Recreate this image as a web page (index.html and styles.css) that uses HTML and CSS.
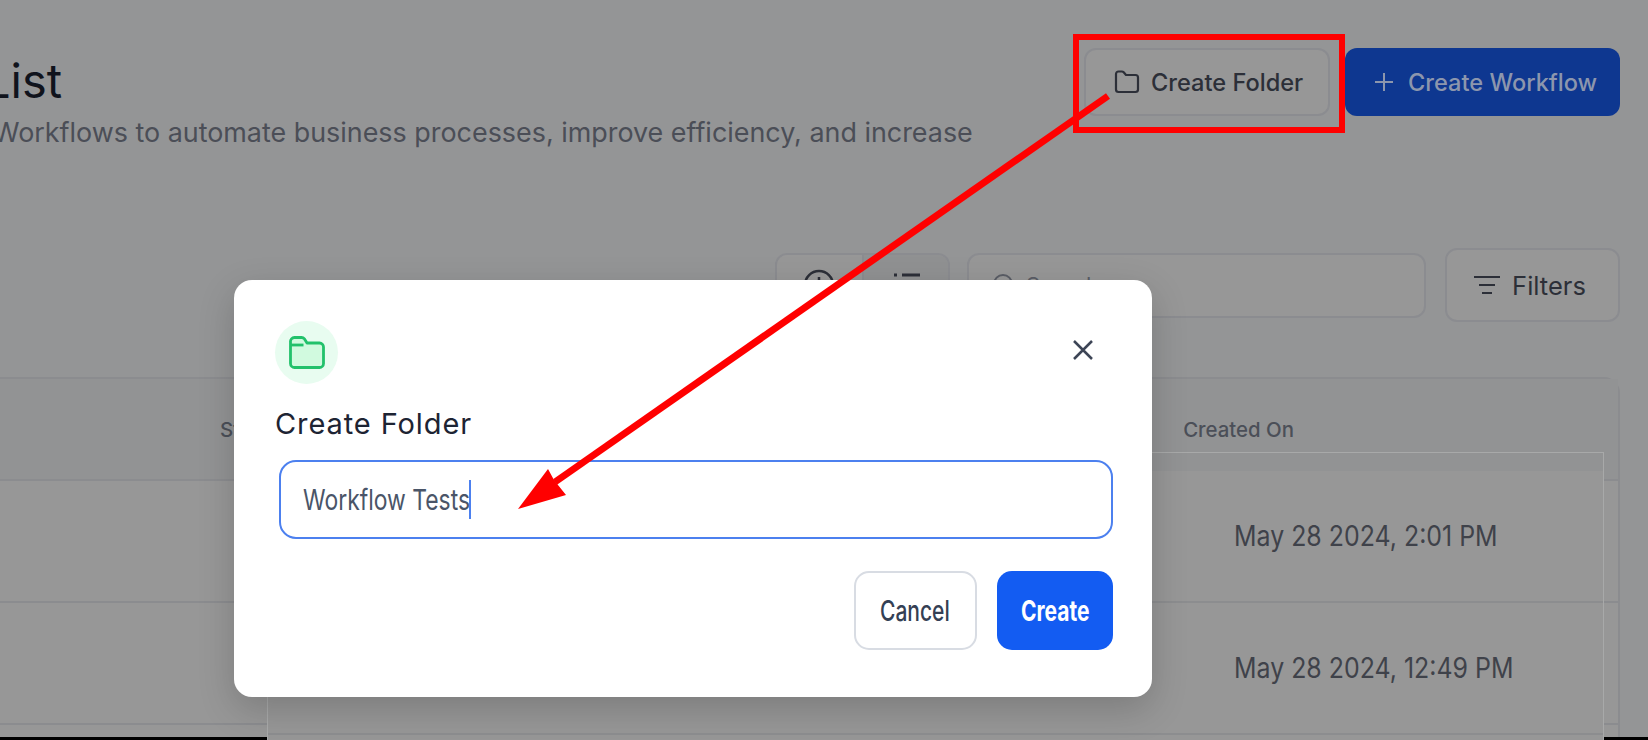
FILE: index.html
```html
<!DOCTYPE html>
<html lang="en">

<head>
    <meta charset="UTF-8">
    <meta name="viewport" content="width=device-width, initial-scale=1.0">
    <title>Workflow List</title>
    <link rel="stylesheet" href="styles.css">
</head>

<body>
    <div class="page">
        <div class="header">
            <div class="headerText">
                <h1 class="title">List</h1>
                <p class="subtitle">Workflows to automate business processes, improve efficiency, and increase</p>
            </div>
            <div class="headerActions">
                <button class="btn btnOutline">
                    <svg width="26" height="24" viewBox="0 0 26 24" fill="none" stroke="#2c2f38" stroke-width="2.200" stroke-linejoin="round">
                        <path d="M2 6.500V4a2.500 2.500 0 0 1 2.500-2.500h3.400c.7 0 1.300.3 1.800.8L12 5h9.500A2.500 2.500 0 0 1 24 7.500V19.500a2.500 2.500 0 0 1-2.500 2.500h-17A2.500 2.500 0 0 1 2 19.500z" />
                    </svg>
                    Create Folder
                </button>
                <button class="btn btnPrimary">
                    <svg width="18" height="18" viewBox="0 0 18 18" stroke="#8c96ad" stroke-width="2">
                        <path d="M9 0v18M0 9h18" />
                    </svg>
                    Create Workflow
                </button>
            </div>
        </div>

        <div class="toolbar">
            <div class="viewToggle">
                <div class="viewOption">
                    <svg width="32" height="32" viewBox="0 0 32 32" fill="none" stroke="#2c2f38" stroke-width="2.500">
                        <circle cx="16" cy="16" r="14" />
                        <path d="M16 8v9" />
                    </svg>
                </div>
                <div class="viewOption viewActive">
                    <svg width="32" height="32" viewBox="0 0 32 32" fill="none" stroke="#2c2f38" stroke-width="3">
                        <path d="M4 6h3M12 6h18M4 16h3M12 16h18" />
                    </svg>
                </div>
            </div>
            <div class="search">
                <svg width="24" height="24" viewBox="0 0 24 24" fill="none" stroke="#5a5d66" stroke-width="2">
                    <circle cx="11" cy="11" r="9" />
                </svg>
                <span>Search</span>
            </div>
            <button class="btn btnFilters">
                <svg width="26" height="20" viewBox="0 0 26 20" stroke="#2c2f38" stroke-width="2">
                    <path d="M0 2h26M5 10h16M8 18h10" />
                </svg>
                Filters
            </button>
        </div>

        <div class="tableCard">
            <div class="tableHead">
                <span class="headStatus">Status</span>
                <span class="headCreated">Created On</span>
            </div>
            <div class="tableRow"></div>
            <div class="tableRow"></div>
            <div class="tableRowEnd"></div>
        </div>
    </div>

    <div class="bottomEdge"></div>

    <div class="pastedRows">
        <div class="pastedHead"></div>
        <div class="pastedRow"><span class="dateText">May 28 2024, 2:01 PM</span></div>
        <div class="pastedRow"><span class="dateText">May 28 2024, 12:49 PM</span></div>
    </div>

    <div class="modal">
        <div class="modalTop">
            <div class="modalIcon">
                <svg width="36" height="33" viewBox="0 0 36 33" fill="#d1fadf" stroke="#22c16b" stroke-width="2.800" stroke-linejoin="round">
                    <path d="M1.500 6a4 4 0 0 1 4-4.500h7c1.200 0 2.200.5 3 1.400L18 7h12.500a4 4 0 0 1 4 4v16.500a4 4 0 0 1-4 4h-25a4 4 0 0 1-4-4z" />
                    <path d="M1.500 9h13" fill="none" />
                </svg>
            </div>
            <svg class="closeIcon" width="22" height="22" viewBox="0 0 22 22" stroke="#3d4556" stroke-width="2.500">
                <path d="M2 2l18 18M20 2L2 20" />
            </svg>
        </div>
        <h2 class="modalTitle">Create Folder</h2>
        <div class="inputBox">
            <span class="squeezed inputText">Workflow Tests</span><span class="caret"></span>
        </div>
        <div class="modalActions">
            <button class="modalBtn cancelBtn"><span class="squeezed btnLabel">Cancel</span></button>
            <button class="modalBtn createBtn"><span class="squeezed btnLabel">Create</span></button>
        </div>
    </div>

    <svg class="annotation" width="1648" height="740" viewBox="0 0 1648 740" fill="#ff0000">
        <rect x="1076" y="37" width="266" height="93" fill="none" stroke="#ff0000" stroke-width="6" />
        <path d="M1108 96L555 482" stroke="#ff0000" stroke-width="7" />
        <path d="M518 509L548 469L554 480L566 495z" />
    </svg>
</body>

</html>
```

FILE: styles.css
```css
* {
    box-sizing: border-box;
}

html,
body {
    margin: 0;
    height: 100%;
    overflow: hidden;
}

body {
    position: relative;
    background-color: #949596;
    font-family: Inter, "Liberation Sans", sans-serif;
}

button {
    font-family: inherit;
}

.page {
    height: 740px;
    padding: 48px 28px 0 0;
    overflow: hidden;
}

.header {
    display: flex;
    justify-content: space-between;
    align-items: flex-start;
    height: 68px;
}

.headerText {
    white-space: nowrap;
}

.title {
    margin: 5px 0 0 -16px;
    font-size: 47px;
    line-height: 56px;
    font-weight: 400;
    color: #10131c;
}

.subtitle {
    margin: 7px 0 0 -7px;
    font-size: 26.900px;
    line-height: 32px;
    color: #4b4e57;
}

.headerActions {
    display: flex;
    gap: 15px;
}

.btn {
    display: flex;
    align-items: center;
    height: 68px;
    border-radius: 12px;
    font-size: 23.600px;
    font-weight: 500;
}

.btnOutline {
    width: 246px;
    padding: 0 0 0 28px;
    gap: 11px;
    background-color: #979797;
    border: 2px solid #8b8c90;
    color: #2c2f38;
}

.btnPrimary {
    width: 275px;
    padding: 0 0 0 30px;
    gap: 15px;
    background-color: #0e3790;
    border: 0;
    color: #8c96ad;
}

.toolbar {
    display: flex;
    justify-content: flex-end;
    align-items: center;
    margin-top: 132px;
}

.viewToggle {
    display: flex;
    width: 175px;
    height: 65px;
    border: 2px solid #8b8c90;
    border-radius: 12px;
    overflow: hidden;
}

.viewOption {
    flex: 1;
    display: flex;
    align-items: center;
    justify-content: center;
    background-color: #979797;
}

.viewActive {
    background-color: #909192;
    border-left: 2px solid #8b8c90;
}

.search {
    display: flex;
    align-items: center;
    gap: 10px;
    width: 459px;
    height: 65px;
    margin: 0 19px 0 17px;
    padding-left: 23px;
    background-color: #979797;
    border: 2px solid #8b8c90;
    border-radius: 12px;
    font-size: 22px;
    color: #5a5d66;
}

.btnFilters {
    justify-content: center;
    gap: 12px;
    width: 175px;
    height: 74px;
    padding: 0 5px 0 0;
    background-color: #979797;
    border: 2px solid #8b8c90;
    font-size: 25.500px;
    font-weight: 400;
    color: #2c2f38;
}

.tableCard {
    margin: 55px 0 0 -20px;
    border: 2px solid #8b8c8f;
    border-bottom: 0;
    border-radius: 16px 16px 0 0;
    background-color: #979797;
}

.tableHead {
    display: flex;
    align-items: center;
    height: 102px;
    background-color: #929394;
    border-bottom: 2px solid #8b8c8f;
    font-size: 20.400px;
    font-weight: 500;
    color: #4b4f58;
}

.headStatus {
    margin-left: 238px;
}

.headCreated {
    margin-left: auto;
    margin-right: 324px;
}

.tableRow {
    height: 122px;
    border-bottom: 2px solid #8b8c8f;
}

.tableRowEnd {
    height: 13px;
}

.bottomEdge {
    position: absolute;
    left: 0;
    right: 0;
    bottom: 0;
    height: 3px;
    background-color: #000;
}

.pastedRows {
    position: absolute;
    left: 267px;
    top: 452px;
    width: 1337px;
    bottom: 0;
    background-color: #979797;
    border: 1px solid #a8a9a9;
    border-bottom: 0;
    overflow: hidden;
}

.pastedHead {
    height: 18px;
    background-color: #929394;
}

.pastedRow {
    display: flex;
    align-items: center;
    height: 132px;
    padding-left: 966px;
    border-bottom: 2px solid #8c8d8f;
    font-size: 28px;
    color: #3f424a;
    white-space: nowrap;
}

.squeezed,
.dateText {
    display: inline-block;
    transform-origin: left center;
}

.squeezed {
    transform: scaleX(0.79);
}

.dateText {
    transform: scaleX(0.89);
}

.modal {
    position: absolute;
    left: 234px;
    top: 280px;
    width: 918px;
    height: 417px;
    padding: 41px 39px 0 41px;
    background-color: #fff;
    border-radius: 18px;
    box-shadow: 0 12px 36px rgba(0, 0, 0, 0.18);
}

.modalTop {
    display: flex;
    justify-content: space-between;
    align-items: center;
}

.modalIcon {
    display: flex;
    align-items: center;
    justify-content: center;
    width: 63px;
    height: 63px;
    border-radius: 50%;
    background-color: #e8fcf0;
}

.closeIcon {
    margin-right: 19px;
    margin-bottom: 6px;
}

.modalTitle {
    margin: 22px 0 0;
    font-size: 29px;
    line-height: 36px;
    font-weight: 400;
    letter-spacing: 0.900px;
    color: #1d2433;
}

.inputBox {
    display: flex;
    align-items: center;
    height: 79px;
    margin: 18px 0 0 4px;
    padding-left: 22px;
    border: 2px solid #4c80ef;
    border-radius: 17px;
    font-size: 29px;
    color: #4a5568;
    white-space: nowrap;
}

.inputText {
    width: 166px;
}

.caret {
    width: 2px;
    height: 39px;
    background-color: #4c80ef;
}

.modalActions {
    display: flex;
    justify-content: flex-end;
    gap: 20px;
    margin-top: 32px;
}

.modalBtn {
    height: 79px;
    border-radius: 15px;
    font-size: 28px;
    font-weight: 500;
    text-align: left;
}

.btnLabel {
    transform: scaleX(0.75);
}

.cancelBtn {
    width: 123px;
    padding: 0 0 0 24px;
    background-color: #fff;
    border: 2px solid #d8dce3;
    color: #344054;
}

.createBtn {
    width: 116px;
    padding: 0 0 0 24px;
    background-color: #135cf2;
    border: 0;
    color: #fff;
    font-weight: 700;
}

.annotation {
    position: absolute;
    left: 0;
    top: 0;
}
```
